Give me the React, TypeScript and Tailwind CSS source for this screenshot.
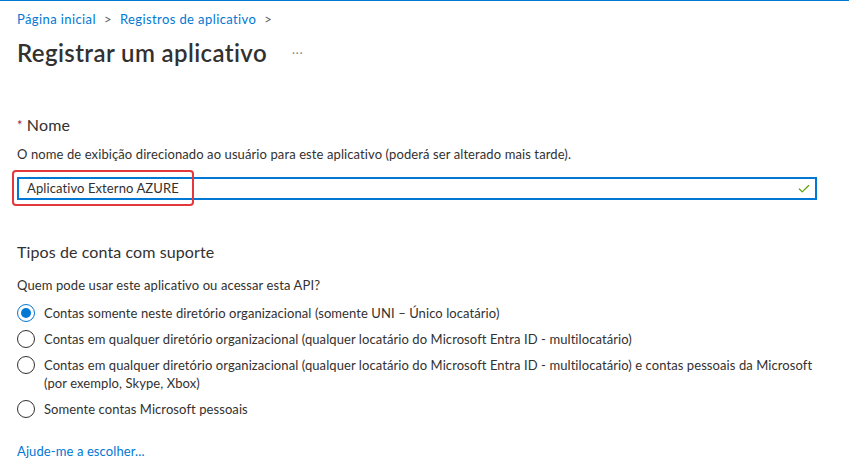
import { Check } from "lucide-react";

const OPTIONS = [
  { label: "Contas somente neste diretório organizacional (somente UNI – Único locatário)", checked: true },
  { label: "Contas em qualquer diretório organizacional (qualquer locatário do Microsoft Entra ID - multilocatário)" },
  {
    label:
      "Contas em qualquer diretório organizacional (qualquer locatário do Microsoft Entra ID - multilocatário) e contas pessoais da Microsoft (por exemplo, Skype, Xbox)",
  },
  { label: "Somente contas Microsoft pessoais" },
];

function Radio({ checked }: { checked?: boolean }) {
  return (
    <span
      className={
        checked
          ? "flex size-[18px] shrink-0 items-center justify-center rounded-full border border-[#0078d4]"
          : "flex size-[18px] shrink-0 items-center justify-center rounded-full border border-[#323130]"
      }
    >
      {checked && <span className="size-[10px] rounded-full bg-[#0078d4]" />}
    </span>
  );
}

export default function App() {
  return (
    <div className="min-h-[465px] bg-white font-['Segoe_UI','Lato',sans-serif] text-[#323130]">
      <div className="h-px bg-[#0078d4]" />
      <div className="px-[17px]">
        <nav className="flex items-center pt-[10px] text-[13px] leading-4 tracking-[0.4px] text-[#0078d4]">
          <span>Página inicial</span>
          <span className="mx-[8px] text-[#605e5c]">&gt;</span>
          <span>Registros de aplicativo</span>
          <span className="mx-[8px] text-[#605e5c]">&gt;</span>
        </nav>

        <div className="mt-[10px] flex items-center">
          <h1 className="text-[24px] font-semibold leading-8 tracking-[0.4px]">Registrar um aplicativo</h1>
          <span className="ml-[25px] text-[11px] tracking-[1px] text-[#8a8886]">···</span>
        </div>

        <div className="mt-[45px] flex items-center text-[16px] leading-[22px] tracking-[0.2px]">
          <span className="mr-[4px] self-start pt-[2px] text-[13px] leading-[18px] text-[#a4262c]">*</span>
          <span>Nome</span>
        </div>
        <p className="mt-[8px] text-[13px] leading-5 tracking-[0.1px]">
          O nome de exibição direcionado ao usuário para este aplicativo (poderá ser alterado mais tarde).
        </p>

        <div className="relative mt-[13px] w-[800px]">
          <div className="flex h-[23px] items-center border-2 border-[#0078d4] pl-[8px] pr-[4px] text-[13px] tracking-[0.1px]">
            <span className="flex-1">Aplicativo Externo AZURE</span>
            <Check className="size-[14px] text-[#57a300]" strokeWidth={2} />
          </div>
          <div className="pointer-events-none absolute left-[-5px] top-[-7px] h-[36px] w-[182px] rounded-[4px] border-2 border-[#e5383d]" />
        </div>

        <h2 className="mt-[41px] text-[16px] leading-[22px] tracking-[0.1px]">Tipos de conta com suporte</h2>
        <p className="mt-[12px] text-[13px] leading-5 tracking-[0.1px]">Quem pode usar este aplicativo ou acessar esta API?</p>

        <div className="mt-[9px] flex flex-col gap-2">
          {OPTIONS.map((o) => (
            <label key={o.label} className="flex items-start gap-[9px] text-[13px] leading-[18px] tracking-[0.08px]">
              <Radio checked={o.checked} />
              <span className="max-w-[780px]">{o.label}</span>
            </label>
          ))}
        </div>

        <a className="mt-[24px] block text-[13px] leading-[18px] tracking-[0.1px] text-[#0078d4]">Ajude-me a escolher...</a>
      </div>
    </div>
  );
}
